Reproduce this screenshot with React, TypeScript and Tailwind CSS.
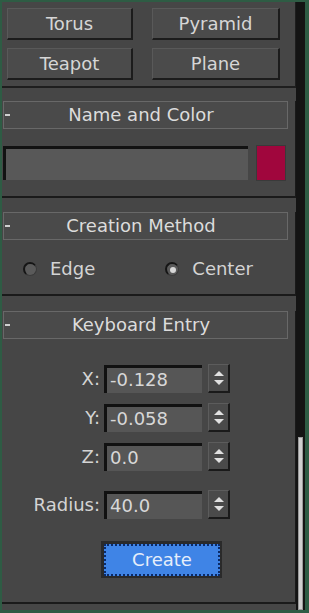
import React from "react";

const font = { fontFamily: '"DejaVu Sans", Verdana, sans-serif' };

const ToolButton = ({ label }: { label: string }) => (
  <div className="h-[32px] flex items-center justify-center bg-[#4b4b4b] border-t border-l border-[#595959] border-r-2 border-b-2 border-r-[#1c1c1c] border-b-[#1c1c1c] text-[18px] text-[#d6d6d6] leading-none">
    {label}
  </div>
);

const RolloutHeader = ({ title }: { title: string }) => (
  <div className="relative ml-[1px] w-[285px] h-[28px] flex items-center justify-center pr-[9px] bg-[#4a4a4a] border border-[#686868] text-[18px] text-[#dcdcdc] leading-none">
    <span className="absolute left-[1px] top-[12px] w-[5px] h-[2px] bg-[#d0d0d0]" />
    {title}
  </div>
);

const Radio = ({ label, checked }: { label: string; checked?: boolean }) => (
  <div className="flex items-center gap-[13px]">
    <div className="w-[14px] h-[14px] rounded-full bg-[#5a5a5a] border-t-2 border-l-2 border-[#151515] border-r border-b border-r-[#3a3a3a] border-b-[#3a3a3a] flex items-center justify-center">
      {checked && <div className="w-[6px] h-[6px] rounded-full bg-[#d8d8d8]" />}
    </div>
    <span className="text-[18px] text-[#d4d4d4] leading-none">{label}</span>
  </div>
);

const Spinner = () => (
  <div className="w-[22px] h-[29px] flex flex-col bg-[#4a4a4a] border-t border-l border-[#5c5c5c] border-r-2 border-b-2 border-r-[#1a1a1a] border-b-[#1a1a1a]">
    <div className="flex-1 flex items-end justify-center pb-[2px]">
      <div className="w-0 h-0 border-l-[5px] border-r-[5px] border-b-[5px] border-l-transparent border-r-transparent border-b-[#e0e0e0]" />
    </div>
    <div className="flex-1 flex items-start justify-center pt-[2px]">
      <div className="w-0 h-0 border-l-[5px] border-r-[5px] border-t-[5px] border-l-transparent border-r-transparent border-t-[#e0e0e0]" />
    </div>
  </div>
);

const SpinnerRow = ({ label, value }: { label: string; value: string }) => (
  <div className="flex items-center h-[29px]">
    <div className="w-[100px] text-right pr-[2px] text-[18px] text-[#d4d4d4] leading-none">
      {label}
    </div>
    <div className="ml-[2px] w-[98px] h-[28px] bg-[#565656] border-t-[3px] border-l-[3px] border-[#111] flex items-center pl-[3px] text-[18px] text-[#d8d8d8] leading-none">
      {value}
    </div>
    <div className="ml-[6px]">
      <Spinner />
    </div>
  </div>
);

export default function App() {
  return (
    <div
      className="w-[309px] h-[613px] bg-[#2e5c44] flex pt-[2px] pb-[3px] pl-[2px] overflow-hidden"
      style={font}
    >
      <div className="w-[294px] h-full bg-[#464646] flex flex-col">
        {/* object type buttons */}
        <div className="h-[86px] border-r border-b-2 border-[#1e1e1e] pt-[6px] pl-[5px]">
          <div className="grid grid-cols-[126px_128px] gap-x-[19px] gap-y-[8px]">
            <ToolButton label="Torus" />
            <ToolButton label="Pyramid" />
            <ToolButton label="Teapot" />
            <ToolButton label="Plane" />
          </div>
        </div>

        {/* name and color */}
        <div className="mt-[13px] h-[97px] border-r border-b-2 border-[#1a1a1a] flex flex-col">
          <RolloutHeader title="Name and Color" />
          <div className="mt-[16px] flex items-center">
            <div className="ml-[1px] w-[245px] h-[34px] bg-[#585858] border-t-[3px] border-l-[3px] border-[#121212]" />
            <div className="ml-[8px] w-[30px] h-[36px] bg-[#a0063d] border border-[#3a3a3a]" />
          </div>
        </div>

        {/* creation method */}
        <div className="mt-[14px] h-[84px] border-r border-b-2 border-[#1a1a1a] flex flex-col">
          <RolloutHeader title="Creation Method" />
          <div className="mt-[20px] flex items-center">
            <div className="ml-[21px]">
              <Radio label="Edge" />
            </div>
            <div className="ml-[70px]">
              <Radio label="Center" checked />
            </div>
          </div>
        </div>

        {/* keyboard entry */}
        <div className="mt-[15px] h-[293px] border-r border-b-2 border-[#1a1a1a] flex flex-col">
          <RolloutHeader title="Keyboard Entry" />
          <div className="mt-[25px] flex flex-col">
            <SpinnerRow label="X:" value="-0.128" />
            <div className="h-[10px]" />
            <SpinnerRow label="Y:" value="-0.058" />
            <div className="h-[10px]" />
            <SpinnerRow label="Z:" value="0.0" />
            <div className="h-[19px]" />
            <SpinnerRow label="Radius:" value="40.0" />
          </div>
          <div className="mt-[22px] ml-[99px] w-[121px] h-[37px] bg-[#2a2a2a] p-[3px] pr-[2px] pb-[2px]">
            <div className="w-full h-full bg-[#3f84e6] border-2 border-dotted border-[#0b2a66] flex items-center justify-center text-[18px] text-[#e6eefa] leading-none">
              Create
            </div>
          </div>
        </div>
      </div>

      {/* scrollbar */}
      <div className="w-[9px] h-full bg-[#141414] flex flex-col justify-end">
        <div className="ml-[2px] w-[5px] h-[173px] bg-[#cfcfcf] border border-[#9a9a9a]" />
      </div>
      <div className="w-[4px] h-full bg-[#2e5c44]" />
    </div>
  );
}
